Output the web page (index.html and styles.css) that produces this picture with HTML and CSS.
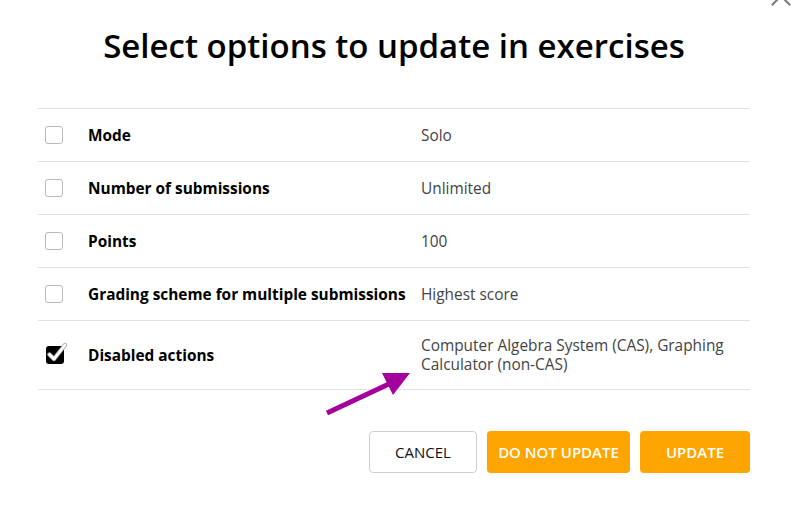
FILE: index.html
```html
<!DOCTYPE html>
<html>
<head>
<meta charset="utf-8">
<link rel="stylesheet" href="styles.css">
</head>
<body>
<div class="close" aria-label="Close"></div>
<div class="dialog">
  <h1 class="title">Select options to update in exercises</h1>
  <div class="table">
    <div class="row">
      <div class="cell check"><span class="box"></span></div>
      <div class="cell label">Mode</div>
      <div class="cell value">Solo</div>
    </div>
    <div class="row">
      <div class="cell check"><span class="box"></span></div>
      <div class="cell label">Number of submissions</div>
      <div class="cell value">Unlimited</div>
    </div>
    <div class="row">
      <div class="cell check"><span class="box"></span></div>
      <div class="cell label">Points</div>
      <div class="cell value">100</div>
    </div>
    <div class="row">
      <div class="cell check"><span class="box"></span></div>
      <div class="cell label">Grading scheme for multiple submissions</div>
      <div class="cell value">Highest score</div>
    </div>
    <div class="row tall">
      <div class="cell check">
        <svg class="checked" width="24" height="22" viewBox="0 0 24 22">
          <rect x="1" y="4" width="18" height="18" rx="3" fill="#000"/>
          <path d="M4.5 12.5 L9 17 L20 3" fill="none" stroke="#aaa" stroke-width="4.4" stroke-linecap="round" stroke-linejoin="round"/>
          <path d="M4.5 12.5 L9 17 L20 3" fill="none" stroke="#fff" stroke-width="2.6" stroke-linecap="round" stroke-linejoin="round"/>
        </svg>
      </div>
      <div class="cell label">Disabled actions</div>
      <div class="cell value">Computer Algebra System (CAS), Graphing Calculator (non-CAS)</div>
    </div>
  </div>
  <div class="actions">
    <button class="btn cancel">CANCEL</button>
    <button class="btn primary">DO NOT UPDATE</button>
    <button class="btn primary wide">UPDATE</button>
  </div>
</div>
<svg class="arrow" width="100" height="60" viewBox="0 0 100 60">
  <line x1="2" y1="42" x2="66" y2="12" stroke="#a4009e" stroke-width="5"/>
  <polygon points="57,2 85,2 68,24" fill="#a4009e"/>
</svg>
</body>
</html>
```
FILE: styles.css
```css
html, body {
  margin: 0;
  padding: 0;
  background: #fff;
}
body {
  font-family: "Open Sans", "Liberation Sans", sans-serif;
  color: #000;
  width: 796px;
  height: 510px;
  overflow: hidden;
  position: relative;
}
.close {
  position: absolute;
  left: 770px;
  top: -15px;
  width: 22px;
  height: 22px;
}
.close::before, .close::after {
  content: "";
  position: absolute;
  left: 10px;
  top: -2px;
  width: 2px;
  height: 26px;
  background: #7a7a7a;
  transform: rotate(45deg);
}
.close::after {
  transform: rotate(-45deg);
}
.dialog {
  margin-left: 38px;
  width: 712px;
  padding-top: 24px;
}
.title {
  margin: 0;
  text-align: center;
  font-size: 33px;
  font-weight: 600;
  line-height: 44px;
  letter-spacing: 0;
}
.table {
  margin-top: 40px;
  border-bottom: 1px solid #e2e2e2;
}
.row {
  display: grid;
  grid-template-columns: 50px 333px 1fr;
  align-items: center;
  height: 52px;
  border-top: 1px solid #e2e2e2;
}
.row.tall {
  height: 68px;
}
.cell.check {
  padding-left: 7px;
  display: flex;
  align-items: center;
}
.box {
  display: block;
  width: 16px;
  height: 16px;
  border: 1px solid #b9b9b9;
  border-radius: 3px;
  background: #fff;
}
.checked {
  display: block;
  margin-top: -4px;
}
.label {
  font-size: 15.4px;
  font-weight: 700;
}
.value {
  font-size: 15.4px;
  color: #444;
  line-height: 19px;
}
.row.tall .value {
  padding-top: 0;
  padding-bottom: 0;
}
.actions {
  display: flex;
  justify-content: flex-end;
  gap: 10px;
  margin-top: 41px;
}
.btn {
  font-family: "Open Sans", "Liberation Sans", sans-serif;
  font-size: 15px;
  height: 42px;
  border-radius: 4px;
  padding: 0 10px;
  cursor: pointer;
}
.cancel {
  width: 108px;
  background: #fff;
  border: 1px solid #cfcfcf;
  color: #111;
}
.primary {
  background: #fea500;
  border: none;
  color: #fff;
  font-weight: 600;
  width: 143px;
}
.primary.wide {
  width: 110px;
}
.arrow {
  position: absolute;
  left: 325px;
  top: 371px;
}
```
